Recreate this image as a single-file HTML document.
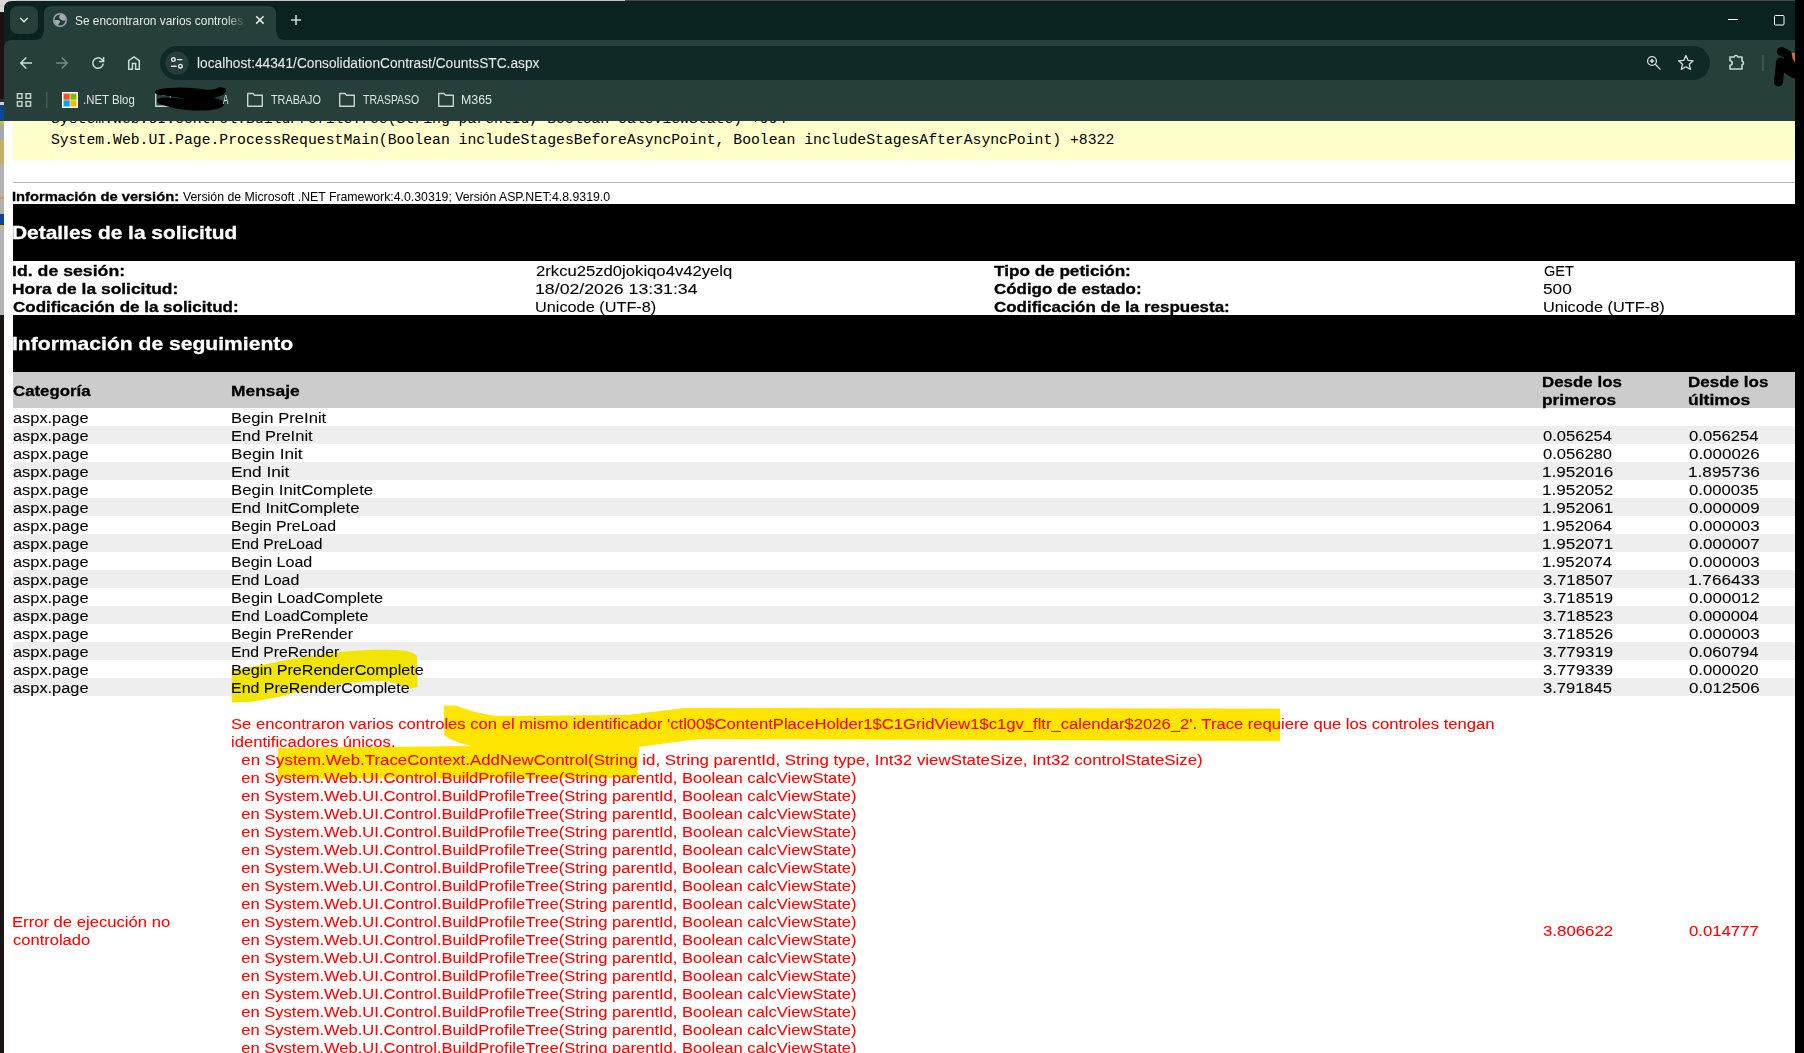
<!DOCTYPE html>
<html><head><meta charset="utf-8">
<style>
*{box-sizing:border-box}
html,body{margin:0;padding:0}
body{width:1804px;height:1053px;overflow:hidden;position:relative;background:#000;font-family:"Liberation Sans",sans-serif}
.a{position:absolute}
.t{position:absolute;white-space:pre;transform-origin:0 0;color:#000}
.mono{font-family:"Liberation Mono",monospace;font-size:14.78px;line-height:20.5px}
.ct{position:absolute;white-space:pre;font-size:13px;color:#dfe9e6;line-height:16px}
</style></head><body>

<div class="a" style="left:4px;top:121px;width:1791px;height:932px;background:#fff"></div>
<div class="a" style="left:13px;top:100px;width:1782px;height:60px;background:#ffffcc"></div>
<div class="t mono" style="left:51px;top:109.4px">System.Web.UI.Control.BuildProfileTree(String parentId, Boolean calcViewState) +994</div>
<div class="t mono" style="left:51px;top:129.9px">System.Web.UI.Page.ProcessRequestMain(Boolean includeStagesBeforeAsyncPoint, Boolean includeStagesAfterAsyncPoint) +8322</div>
<div class="a" style="left:13px;top:182px;width:1782px;height:1px;background:#b8b8b8"></div>
<div class="a" style="left:13px;top:204px;width:1782px;height:57px;background:#000"></div>
<div class="a" style="left:13px;top:315px;width:1782px;height:57px;background:#000"></div>
<div class="a" style="left:13px;top:372px;width:1782px;height:36px;background:#cccccc"></div>
<div class="a" style="left:13px;top:426px;width:1782px;height:18px;background:#eeeeee"></div>
<div class="a" style="left:13px;top:462px;width:1782px;height:18px;background:#eeeeee"></div>
<div class="a" style="left:13px;top:498px;width:1782px;height:18px;background:#eeeeee"></div>
<div class="a" style="left:13px;top:534px;width:1782px;height:18px;background:#eeeeee"></div>
<div class="a" style="left:13px;top:570px;width:1782px;height:18px;background:#eeeeee"></div>
<div class="a" style="left:13px;top:606px;width:1782px;height:18px;background:#eeeeee"></div>
<div class="a" style="left:13px;top:642px;width:1782px;height:18px;background:#eeeeee"></div>
<div class="a" style="left:13px;top:678px;width:1782px;height:18px;background:#eeeeee"></div>
<svg class="a" style="left:0;top:0" width="1804" height="1053" viewBox="0 0 1804 1053">
<path fill="#f2e600" d="M231.7,671 C245,668 255,666 262,665 C290,659 330,652 366,650 C385,649.5 400,650 406,651 C412,652 415,654 417,656 L417.5,687 C414,688 411,688 410,688 C400,685 390,681 380,681 C370,681 360,682 353,682.5 C340,684 325,686 313,688.5 C295,692 285,696 273,698 C262,700 250,702 246,702 L231.7,702.5 Z"/>
<path fill="#ffe500" d="M444,705.5 L456,705.5 C468,710 480,714 498,716 L627,715 C645,713 665,710 685,708 L1280,708.5 L1280,741 L700,739 C680,741 660,744 639,747 L637.5,778 L278,778.5 L278,748 L473,746 C462,744 452,741 444,735 Z"/>
</svg>

<div class="t" style="left:11.83px;top:188.5px;font-size:12.6px;line-height:16px;transform:scaleX(1.1702);font-weight:700;-webkit-text-stroke:0.3px currentColor">Información de versión:</div>
<div class="t" style="left:183.00px;top:188.5px;font-size:12.32px;line-height:16px;transform:scaleX(0.9979)">Versión de Microsoft .NET Framework:4.0.30319; Versión ASP.NET:4.8.9319.0</div>
<div class="t" style="left:11.83px;top:222.4px;font-size:17.9px;line-height:22px;transform:scaleX(1.1675);font-weight:700;-webkit-text-stroke:0.3px currentColor;color:#fff">Detalles de la solicitud</div>
<div class="t" style="left:11.82px;top:333.1px;font-size:17.9px;line-height:22px;transform:scaleX(1.1789);font-weight:700;-webkit-text-stroke:0.3px currentColor;color:#fff">Información de seguimiento</div>
<div class="t" style="left:12.04px;top:262px;font-size:15.3px;line-height:18px;transform:scaleX(1.1573);font-weight:700;-webkit-text-stroke:0.3px currentColor">Id. de sesión:</div>
<div class="t" style="left:536.30px;top:262px;font-size:15.3px;line-height:18px;transform:scaleX(1.0889);-webkit-text-stroke:0.08px currentColor">2rkcu25zd0jokiqo4v42yelq</div>
<div class="t" style="left:994.40px;top:262px;font-size:15.3px;line-height:18px;transform:scaleX(1.1207);font-weight:700;-webkit-text-stroke:0.3px currentColor">Tipo de petición:</div>
<div class="t" style="left:1543.70px;top:262px;font-size:15.3px;line-height:18px;transform:scaleX(0.9484);-webkit-text-stroke:0.08px currentColor">GET</div>
<div class="t" style="left:12.06px;top:280px;font-size:15.3px;line-height:18px;transform:scaleX(1.1375);font-weight:700;-webkit-text-stroke:0.3px currentColor">Hora de la solicitud:</div>
<div class="t" style="left:535.14px;top:280px;font-size:15.3px;line-height:18px;transform:scaleX(1.1583);-webkit-text-stroke:0.08px currentColor">18/02/2026 13:31:34</div>
<div class="t" style="left:994.40px;top:280px;font-size:15.3px;line-height:18px;transform:scaleX(1.1061);font-weight:700;-webkit-text-stroke:0.3px currentColor">Código de estado:</div>
<div class="t" style="left:1542.58px;top:280px;font-size:15.3px;line-height:18px;transform:scaleX(1.1250);-webkit-text-stroke:0.08px currentColor">500</div>
<div class="t" style="left:13.20px;top:298px;font-size:15.3px;line-height:18px;transform:scaleX(1.1104);font-weight:700;-webkit-text-stroke:0.3px currentColor">Codificación de la solicitud:</div>
<div class="t" style="left:535.24px;top:298px;font-size:15.3px;line-height:18px;transform:scaleX(1.0643);-webkit-text-stroke:0.08px currentColor">Unicode (UTF-8)</div>
<div class="t" style="left:994.40px;top:298px;font-size:15.3px;line-height:18px;transform:scaleX(1.1094);font-weight:700;-webkit-text-stroke:0.3px currentColor">Codificación de la respuesta:</div>
<div class="t" style="left:1542.63px;top:298px;font-size:15.3px;line-height:18px;transform:scaleX(1.0688);-webkit-text-stroke:0.08px currentColor">Unicode (UTF-8)</div>
<div class="t" style="left:13.20px;top:382px;font-size:15.3px;line-height:18px;transform:scaleX(1.1000);font-weight:700;-webkit-text-stroke:0.3px currentColor">Categoría</div>
<div class="t" style="left:231.06px;top:382px;font-size:15.3px;line-height:18px;transform:scaleX(1.1373);font-weight:700;-webkit-text-stroke:0.3px currentColor">Mensaje</div>
<div class="t" style="left:1541.59px;top:373px;font-size:15.3px;line-height:18px;transform:scaleX(1.1056);font-weight:700;-webkit-text-stroke:0.3px currentColor">Desde los</div>
<div class="t" style="left:1541.57px;top:391px;font-size:15.3px;line-height:18px;transform:scaleX(1.1328);font-weight:700;-webkit-text-stroke:0.3px currentColor">primeros</div>
<div class="t" style="left:1687.99px;top:373px;font-size:15.3px;line-height:18px;transform:scaleX(1.1127);font-weight:700;-webkit-text-stroke:0.3px currentColor">Desde los</div>
<div class="t" style="left:1687.95px;top:391px;font-size:15.3px;line-height:18px;transform:scaleX(1.1453);font-weight:700;-webkit-text-stroke:0.3px currentColor">últimos</div>
<div class="t" style="left:13.20px;top:409px;font-size:15.3px;line-height:18px;transform:scaleX(1.0700);-webkit-text-stroke:0.08px currentColor">aspx.page</div>
<div class="t" style="left:231.31px;top:409px;font-size:15.3px;line-height:18px;transform:scaleX(1.0874);-webkit-text-stroke:0.08px currentColor">Begin PreInit</div>
<div class="t" style="left:13.20px;top:427px;font-size:15.3px;line-height:18px;transform:scaleX(1.0700);-webkit-text-stroke:0.08px currentColor">aspx.page</div>
<div class="t" style="left:231.32px;top:427px;font-size:15.3px;line-height:18px;transform:scaleX(1.0787);-webkit-text-stroke:0.08px currentColor">End PreInit</div>
<div class="t" style="left:1542.70px;top:427px;font-size:15.3px;line-height:18px;transform:scaleX(1.0813);-webkit-text-stroke:0.08px currentColor">0.056254</div>
<div class="t" style="left:1689.05px;top:427px;font-size:15.3px;line-height:18px;transform:scaleX(1.0898);-webkit-text-stroke:0.08px currentColor">0.056254</div>
<div class="t" style="left:13.20px;top:445px;font-size:15.3px;line-height:18px;transform:scaleX(1.0700);-webkit-text-stroke:0.08px currentColor">aspx.page</div>
<div class="t" style="left:231.28px;top:445px;font-size:15.3px;line-height:18px;transform:scaleX(1.1222);-webkit-text-stroke:0.08px currentColor">Begin Init</div>
<div class="t" style="left:1542.70px;top:445px;font-size:15.3px;line-height:18px;transform:scaleX(1.0813);-webkit-text-stroke:0.08px currentColor">0.056280</div>
<div class="t" style="left:1689.05px;top:445px;font-size:15.3px;line-height:18px;transform:scaleX(1.1071);-webkit-text-stroke:0.08px currentColor">0.000026</div>
<div class="t" style="left:13.20px;top:463px;font-size:15.3px;line-height:18px;transform:scaleX(1.0700);-webkit-text-stroke:0.08px currentColor">aspx.page</div>
<div class="t" style="left:231.27px;top:463px;font-size:15.3px;line-height:18px;transform:scaleX(1.1255);-webkit-text-stroke:0.08px currentColor">End Init</div>
<div class="t" style="left:1541.58px;top:463px;font-size:15.3px;line-height:18px;transform:scaleX(1.1161);-webkit-text-stroke:0.08px currentColor">1.952016</div>
<div class="t" style="left:1687.92px;top:463px;font-size:15.3px;line-height:18px;transform:scaleX(1.1250);-webkit-text-stroke:0.08px currentColor">1.895736</div>
<div class="t" style="left:13.20px;top:481px;font-size:15.3px;line-height:18px;transform:scaleX(1.0700);-webkit-text-stroke:0.08px currentColor">aspx.page</div>
<div class="t" style="left:231.30px;top:481px;font-size:15.3px;line-height:18px;transform:scaleX(1.1000);-webkit-text-stroke:0.08px currentColor">Begin InitComplete</div>
<div class="t" style="left:1541.58px;top:481px;font-size:15.3px;line-height:18px;transform:scaleX(1.1161);-webkit-text-stroke:0.08px currentColor">1.952052</div>
<div class="t" style="left:1689.05px;top:481px;font-size:15.3px;line-height:18px;transform:scaleX(1.0898);-webkit-text-stroke:0.08px currentColor">0.000035</div>
<div class="t" style="left:13.20px;top:499px;font-size:15.3px;line-height:18px;transform:scaleX(1.0700);-webkit-text-stroke:0.08px currentColor">aspx.page</div>
<div class="t" style="left:231.31px;top:499px;font-size:15.3px;line-height:18px;transform:scaleX(1.0948);-webkit-text-stroke:0.08px currentColor">End InitComplete</div>
<div class="t" style="left:1541.58px;top:499px;font-size:15.3px;line-height:18px;transform:scaleX(1.1161);-webkit-text-stroke:0.08px currentColor">1.952061</div>
<div class="t" style="left:1689.05px;top:499px;font-size:15.3px;line-height:18px;transform:scaleX(1.1071);-webkit-text-stroke:0.08px currentColor">0.000009</div>
<div class="t" style="left:13.20px;top:517px;font-size:15.3px;line-height:18px;transform:scaleX(1.0700);-webkit-text-stroke:0.08px currentColor">aspx.page</div>
<div class="t" style="left:231.36px;top:517px;font-size:15.3px;line-height:18px;transform:scaleX(1.0370);-webkit-text-stroke:0.08px currentColor">Begin PreLoad</div>
<div class="t" style="left:1541.60px;top:517px;font-size:15.3px;line-height:18px;transform:scaleX(1.0984);-webkit-text-stroke:0.08px currentColor">1.952064</div>
<div class="t" style="left:1689.05px;top:517px;font-size:15.3px;line-height:18px;transform:scaleX(1.1071);-webkit-text-stroke:0.08px currentColor">0.000003</div>
<div class="t" style="left:13.20px;top:535px;font-size:15.3px;line-height:18px;transform:scaleX(1.0700);-webkit-text-stroke:0.08px currentColor">aspx.page</div>
<div class="t" style="left:231.38px;top:535px;font-size:15.3px;line-height:18px;transform:scaleX(1.0250);-webkit-text-stroke:0.08px currentColor">End PreLoad</div>
<div class="t" style="left:1541.58px;top:535px;font-size:15.3px;line-height:18px;transform:scaleX(1.1161);-webkit-text-stroke:0.08px currentColor">1.952071</div>
<div class="t" style="left:1689.05px;top:535px;font-size:15.3px;line-height:18px;transform:scaleX(1.1071);-webkit-text-stroke:0.08px currentColor">0.000007</div>
<div class="t" style="left:13.20px;top:553px;font-size:15.3px;line-height:18px;transform:scaleX(1.0700);-webkit-text-stroke:0.08px currentColor">aspx.page</div>
<div class="t" style="left:231.35px;top:553px;font-size:15.3px;line-height:18px;transform:scaleX(1.0500);-webkit-text-stroke:0.08px currentColor">Begin Load</div>
<div class="t" style="left:1541.60px;top:553px;font-size:15.3px;line-height:18px;transform:scaleX(1.0984);-webkit-text-stroke:0.08px currentColor">1.952074</div>
<div class="t" style="left:1689.05px;top:553px;font-size:15.3px;line-height:18px;transform:scaleX(1.1071);-webkit-text-stroke:0.08px currentColor">0.000003</div>
<div class="t" style="left:13.20px;top:571px;font-size:15.3px;line-height:18px;transform:scaleX(1.0700);-webkit-text-stroke:0.08px currentColor">aspx.page</div>
<div class="t" style="left:231.36px;top:571px;font-size:15.3px;line-height:18px;transform:scaleX(1.0422);-webkit-text-stroke:0.08px currentColor">End Load</div>
<div class="t" style="left:1542.70px;top:571px;font-size:15.3px;line-height:18px;transform:scaleX(1.0984);-webkit-text-stroke:0.08px currentColor">3.718507</div>
<div class="t" style="left:1687.92px;top:571px;font-size:15.3px;line-height:18px;transform:scaleX(1.1250);-webkit-text-stroke:0.08px currentColor">1.766433</div>
<div class="t" style="left:13.20px;top:589px;font-size:15.3px;line-height:18px;transform:scaleX(1.0700);-webkit-text-stroke:0.08px currentColor">aspx.page</div>
<div class="t" style="left:231.34px;top:589px;font-size:15.3px;line-height:18px;transform:scaleX(1.0645);-webkit-text-stroke:0.08px currentColor">Begin LoadComplete</div>
<div class="t" style="left:1542.70px;top:589px;font-size:15.3px;line-height:18px;transform:scaleX(1.0984);-webkit-text-stroke:0.08px currentColor">3.718519</div>
<div class="t" style="left:1689.05px;top:589px;font-size:15.3px;line-height:18px;transform:scaleX(1.1071);-webkit-text-stroke:0.08px currentColor">0.000012</div>
<div class="t" style="left:13.20px;top:607px;font-size:15.3px;line-height:18px;transform:scaleX(1.0700);-webkit-text-stroke:0.08px currentColor">aspx.page</div>
<div class="t" style="left:231.35px;top:607px;font-size:15.3px;line-height:18px;transform:scaleX(1.0500);-webkit-text-stroke:0.08px currentColor">End LoadComplete</div>
<div class="t" style="left:1542.70px;top:607px;font-size:15.3px;line-height:18px;transform:scaleX(1.0984);-webkit-text-stroke:0.08px currentColor">3.718523</div>
<div class="t" style="left:1689.05px;top:607px;font-size:15.3px;line-height:18px;transform:scaleX(1.0898);-webkit-text-stroke:0.08px currentColor">0.000004</div>
<div class="t" style="left:13.20px;top:625px;font-size:15.3px;line-height:18px;transform:scaleX(1.0700);-webkit-text-stroke:0.08px currentColor">aspx.page</div>
<div class="t" style="left:231.36px;top:625px;font-size:15.3px;line-height:18px;transform:scaleX(1.0393);-webkit-text-stroke:0.08px currentColor">Begin PreRender</div>
<div class="t" style="left:1542.70px;top:625px;font-size:15.3px;line-height:18px;transform:scaleX(1.0984);-webkit-text-stroke:0.08px currentColor">3.718526</div>
<div class="t" style="left:1689.05px;top:625px;font-size:15.3px;line-height:18px;transform:scaleX(1.1071);-webkit-text-stroke:0.08px currentColor">0.000003</div>
<div class="t" style="left:13.20px;top:643px;font-size:15.3px;line-height:18px;transform:scaleX(1.0700);-webkit-text-stroke:0.08px currentColor">aspx.page</div>
<div class="t" style="left:231.37px;top:643px;font-size:15.3px;line-height:18px;transform:scaleX(1.0257);-webkit-text-stroke:0.08px currentColor">End PreRender</div>
<div class="t" style="left:1542.70px;top:643px;font-size:15.3px;line-height:18px;transform:scaleX(1.0984);-webkit-text-stroke:0.08px currentColor">3.779319</div>
<div class="t" style="left:1689.05px;top:643px;font-size:15.3px;line-height:18px;transform:scaleX(1.0898);-webkit-text-stroke:0.08px currentColor">0.060794</div>
<div class="t" style="left:13.20px;top:661px;font-size:15.3px;line-height:18px;transform:scaleX(1.0700);-webkit-text-stroke:0.08px currentColor">aspx.page</div>
<div class="t" style="left:231.35px;top:661px;font-size:15.3px;line-height:18px;transform:scaleX(1.0536);-webkit-text-stroke:0.08px currentColor">Begin PreRenderComplete</div>
<div class="t" style="left:1542.70px;top:661px;font-size:15.3px;line-height:18px;transform:scaleX(1.0984);-webkit-text-stroke:0.08px currentColor">3.779339</div>
<div class="t" style="left:1689.05px;top:661px;font-size:15.3px;line-height:18px;transform:scaleX(1.0898);-webkit-text-stroke:0.08px currentColor">0.000020</div>
<div class="t" style="left:13.20px;top:679px;font-size:15.3px;line-height:18px;transform:scaleX(1.0700);-webkit-text-stroke:0.08px currentColor">aspx.page</div>
<div class="t" style="left:231.36px;top:679px;font-size:15.3px;line-height:18px;transform:scaleX(1.0447);-webkit-text-stroke:0.08px currentColor">End PreRenderComplete</div>
<div class="t" style="left:1542.70px;top:679px;font-size:15.3px;line-height:18px;transform:scaleX(1.0813);-webkit-text-stroke:0.08px currentColor">3.791845</div>
<div class="t" style="left:1689.05px;top:679px;font-size:15.3px;line-height:18px;transform:scaleX(1.1071);-webkit-text-stroke:0.08px currentColor">0.012506</div>
<div class="t" style="left:231.11px;top:715px;font-size:15.3px;line-height:18px;transform:scaleX(1.0866);-webkit-text-stroke:0.08px currentColor;color:#ff0000">Se encontraron varios controles con el mismo identificador 'ctl00$ContentPlaceHolder1$C1GridView1$c1gv_fltr_calendar$2026_2'. Trace requiere que los controles tengan</div>
<div class="t" style="left:231.11px;top:733px;font-size:15.3px;line-height:18px;transform:scaleX(1.0872);-webkit-text-stroke:0.08px currentColor;color:#ff0000">identificadores únicos.</div>
<div class="t" style="left:232.08px;top:751px;font-size:15.3px;line-height:18px;transform:scaleX(1.1020);-webkit-text-stroke:0.08px currentColor;color:#ff0000">  en System.Web.TraceContext.AddNewControl(String id, String parentId, String type, Int32 viewStateSize, Int32 controlStateSize)</div>
<div class="t" style="left:232.26px;top:769px;font-size:15.3px;line-height:18px;transform:scaleX(1.0824);-webkit-text-stroke:0.08px currentColor;color:#ff0000">  en System.Web.UI.Control.BuildProfileTree(String parentId, Boolean calcViewState)</div>
<div class="t" style="left:232.26px;top:787px;font-size:15.3px;line-height:18px;transform:scaleX(1.0824);-webkit-text-stroke:0.08px currentColor;color:#ff0000">  en System.Web.UI.Control.BuildProfileTree(String parentId, Boolean calcViewState)</div>
<div class="t" style="left:232.26px;top:805px;font-size:15.3px;line-height:18px;transform:scaleX(1.0824);-webkit-text-stroke:0.08px currentColor;color:#ff0000">  en System.Web.UI.Control.BuildProfileTree(String parentId, Boolean calcViewState)</div>
<div class="t" style="left:232.26px;top:823px;font-size:15.3px;line-height:18px;transform:scaleX(1.0824);-webkit-text-stroke:0.08px currentColor;color:#ff0000">  en System.Web.UI.Control.BuildProfileTree(String parentId, Boolean calcViewState)</div>
<div class="t" style="left:232.26px;top:841px;font-size:15.3px;line-height:18px;transform:scaleX(1.0824);-webkit-text-stroke:0.08px currentColor;color:#ff0000">  en System.Web.UI.Control.BuildProfileTree(String parentId, Boolean calcViewState)</div>
<div class="t" style="left:232.26px;top:859px;font-size:15.3px;line-height:18px;transform:scaleX(1.0824);-webkit-text-stroke:0.08px currentColor;color:#ff0000">  en System.Web.UI.Control.BuildProfileTree(String parentId, Boolean calcViewState)</div>
<div class="t" style="left:232.26px;top:877px;font-size:15.3px;line-height:18px;transform:scaleX(1.0824);-webkit-text-stroke:0.08px currentColor;color:#ff0000">  en System.Web.UI.Control.BuildProfileTree(String parentId, Boolean calcViewState)</div>
<div class="t" style="left:232.26px;top:895px;font-size:15.3px;line-height:18px;transform:scaleX(1.0824);-webkit-text-stroke:0.08px currentColor;color:#ff0000">  en System.Web.UI.Control.BuildProfileTree(String parentId, Boolean calcViewState)</div>
<div class="t" style="left:232.26px;top:913px;font-size:15.3px;line-height:18px;transform:scaleX(1.0824);-webkit-text-stroke:0.08px currentColor;color:#ff0000">  en System.Web.UI.Control.BuildProfileTree(String parentId, Boolean calcViewState)</div>
<div class="t" style="left:232.26px;top:931px;font-size:15.3px;line-height:18px;transform:scaleX(1.0824);-webkit-text-stroke:0.08px currentColor;color:#ff0000">  en System.Web.UI.Control.BuildProfileTree(String parentId, Boolean calcViewState)</div>
<div class="t" style="left:232.26px;top:949px;font-size:15.3px;line-height:18px;transform:scaleX(1.0824);-webkit-text-stroke:0.08px currentColor;color:#ff0000">  en System.Web.UI.Control.BuildProfileTree(String parentId, Boolean calcViewState)</div>
<div class="t" style="left:232.26px;top:967px;font-size:15.3px;line-height:18px;transform:scaleX(1.0824);-webkit-text-stroke:0.08px currentColor;color:#ff0000">  en System.Web.UI.Control.BuildProfileTree(String parentId, Boolean calcViewState)</div>
<div class="t" style="left:232.26px;top:985px;font-size:15.3px;line-height:18px;transform:scaleX(1.0824);-webkit-text-stroke:0.08px currentColor;color:#ff0000">  en System.Web.UI.Control.BuildProfileTree(String parentId, Boolean calcViewState)</div>
<div class="t" style="left:232.26px;top:1003px;font-size:15.3px;line-height:18px;transform:scaleX(1.0824);-webkit-text-stroke:0.08px currentColor;color:#ff0000">  en System.Web.UI.Control.BuildProfileTree(String parentId, Boolean calcViewState)</div>
<div class="t" style="left:232.26px;top:1021px;font-size:15.3px;line-height:18px;transform:scaleX(1.0824);-webkit-text-stroke:0.08px currentColor;color:#ff0000">  en System.Web.UI.Control.BuildProfileTree(String parentId, Boolean calcViewState)</div>
<div class="t" style="left:232.26px;top:1039px;font-size:15.3px;line-height:18px;transform:scaleX(1.0824);-webkit-text-stroke:0.08px currentColor;color:#ff0000">  en System.Web.UI.Control.BuildProfileTree(String parentId, Boolean calcViewState)</div>
<div class="t" style="left:232.26px;top:1057px;font-size:15.3px;line-height:18px;transform:scaleX(1.0824);-webkit-text-stroke:0.08px currentColor;color:#ff0000">  en System.Web.UI.Control.BuildProfileTree(String parentId, Boolean calcViewState)</div>
<div class="t" style="left:12.21px;top:913px;font-size:15.3px;line-height:18px;transform:scaleX(1.0882);-webkit-text-stroke:0.08px currentColor;color:#ff0000">Error de ejecución no</div>
<div class="t" style="left:13.30px;top:931px;font-size:15.3px;line-height:18px;transform:scaleX(1.0803);-webkit-text-stroke:0.08px currentColor;color:#ff0000">controlado</div>
<div class="t" style="left:1542.50px;top:921.8px;font-size:15.3px;line-height:18px;transform:scaleX(1.1000);-webkit-text-stroke:0.08px currentColor;color:#ff0000">3.806622</div>
<div class="t" style="left:1689.10px;top:921.8px;font-size:15.3px;line-height:18px;transform:scaleX(1.0937);-webkit-text-stroke:0.08px currentColor;color:#ff0000">0.014777</div>
<!-- desktop edges -->
<div class="a" style="left:0;top:0;width:4px;height:1053px;background:#1a1412"></div>
<div class="a" style="left:0;top:0;width:4px;height:12px;background:#d8d8d8"></div>
<div class="a" style="left:0;top:99px;width:4px;height:3px;background:#2c2c2c"></div>
<div class="a" style="left:0;top:102px;width:4px;height:3px;background:#d0d0d0"></div>
<div class="a" style="left:0;top:105px;width:4px;height:16px;background:#0b4792"></div>
<div class="a" style="left:0;top:121px;width:4px;height:3px;background:#c9c210"></div>
<div class="a" style="left:0;top:124px;width:4px;height:16px;background:#a8a8a8"></div>
<div class="a" style="left:0;top:140px;width:4px;height:24px;background:#c6b066"></div>
<div class="a" style="left:0;top:164px;width:4px;height:50px;background:#b2b2b2"></div>
<div class="a" style="left:0;top:197px;width:4px;height:2px;background:#d49a40"></div>
<div class="a" style="left:0;top:214px;width:4px;height:11px;background:#0b4792"></div>
<div class="a" style="left:0;top:225px;width:4px;height:2px;background:#c9c210"></div>
<div class="a" style="left:0;top:227px;width:4px;height:88px;background:#b4b4b4"></div>
<div class="a" style="left:0;top:0;width:625px;height:1px;background:#c4c4c4"></div>
<div class="a" style="left:625px;top:0;width:1170px;height:1px;background:#464646"></div>
<svg class="a" style="left:0;top:0" width="1804" height="122" viewBox="0 0 1804 122">
  <!-- tab strip -->
  <rect x="0" y="0" width="16" height="12" fill="#d8d8d8"/>
  <rect x="0" y="12" width="4" height="30" fill="#1a1412"/>
  <path fill="#0a2320" d="M4,9 Q4,1 12,1 L1795,1 L1795,50 L4,50 Z"/>
  <!-- toolbar -->
  <path fill="#263f3b" d="M4,48 Q4,40 12,40 L1795,40 L1795,121 L4,121 Z"/>
  <!-- tab search btn -->
  <rect x="10" y="6" width="28" height="28" rx="8" fill="#263f3b"/>
  <path d="M20.3,18 L24,21.7 L27.7,18" fill="none" stroke="#e8eeeb" stroke-width="1.4"/>
  <!-- active tab -->
  <path fill="#263f3b" d="M34,40 Q44,40 44,30 L44,14 Q44,6 52,6 L268,6 Q276,6 276,14 L276,30 Q276,40 286,40 Z"/>
  <!-- globe -->
  <circle cx="60" cy="20" r="7" fill="#a6acb4"/>
  <circle cx="60" cy="20" r="5.6" fill="#223e39"/>
  <path fill="#a6acb4" d="M60.6,14.4 C59.6,15.4 58.9,16.4 59.2,17.6 C59.5,18.7 60.6,19.4 61.4,19.9 C62.4,20.5 63.6,20.8 65.2,20.6 L65.6,19.5 C65.6,16.6 63.5,14.6 60.6,14.4 Z"/>
  <path fill="#a6acb4" d="M54.4,20.2 C56,20 57.6,19.9 58.9,20.3 C60.3,20.8 60.5,21.7 59.8,22.4 C59,23.1 58.2,23.9 58.4,25.2 C56.2,24.8 54.5,22.7 54.4,20.2 Z"/>
  <!-- close x -->
  <path d="M256.2,16.2 L263.6,23.6 M263.6,16.2 L256.2,23.6" stroke="#e8eeeb" stroke-width="1.5"/>
  <!-- new tab + -->
  <path d="M291,20 L301,20 M296,15 L296,25" stroke="#c5dbd5" stroke-width="1.6"/>
  <!-- window controls -->
  <path d="M1728,19.5 L1738,19.5" stroke="#fff" stroke-width="1"/>
  <rect x="1774.5" y="15.5" width="9.5" height="9.5" rx="1" fill="none" stroke="#fff" stroke-width="1"/>
  <!-- nav icons -->
  <g fill="none" stroke="#c7ddd7" stroke-width="1.5">
    <path d="M32,63 L21,63 M26.3,57.5 L20.8,63 L26.3,68.5"/>
    <path d="M103.2,63.6 A5.2,5.2 0 1 1 101.9,59.6 L103.4,61.3"/>
    <path d="M99.1,61.4 L103.6,61.4 L103.6,57.1"/>
    <path d="M128.7,69.3 L128.7,60.6 L134,56.8 L139.3,60.6 L139.3,69.3 L135.6,69.3 L135.6,63.6 L132.4,63.6 L132.4,69.3 Z"/>
  </g>
  <path d="M67,63 L56,63 M61.7,57.5 L67.2,63 L61.7,68.5" fill="none" stroke="#748a84" stroke-width="1.5"/>
  
  <!-- omnibox -->
  <rect x="160" y="46" width="1550" height="34" rx="17" fill="#112926"/>
  <circle cx="177" cy="63" r="11.6" fill="#263d39"/>
  <g stroke="#e0e8e5" stroke-width="1.4" fill="none">
    <circle cx="173.4" cy="59.6" r="1.8"/>
    <path d="M177,59.6 L182.4,59.6 M171,66.2 L176.6,66.2"/>
    <circle cx="180.4" cy="66.2" r="1.8"/>
  </g>
  <!-- zoom + star -->
  <g fill="none" stroke="#d6dcda" stroke-width="1.3">
    <circle cx="1652" cy="61" r="4.4"/>
    <path d="M1655.3,64.3 L1660.5,69.6"/>
    <path d="M1685.9,55.6 L1688,60.3 L1693.2,60.8 L1689.3,64.3 L1690.5,69.4 L1685.9,66.8 L1681.3,69.4 L1682.5,64.3 L1678.6,60.8 L1683.8,60.3 Z" stroke-linejoin="round"/>
  </g>
  <path d="M1649.9,61 L1654.1,61 M1652,58.9 L1652,63.1" stroke="#d6dcda" stroke-width="1.6"/>
  <!-- puzzle -->
  <path d="M1730,57 L1734,57 A2.1,2.1 0 0 1 1738,57 L1742,57 L1742,61 A2.1,2.1 0 0 1 1742,65 L1742,69 L1730,69 L1730,65.2 A2.2,2.2 0 0 0 1730,60.8 Z" fill="none" stroke="#c7ddd7" stroke-width="1.6" stroke-linejoin="round"/>
  <rect x="1762" y="55" width="2" height="16" fill="#3d5652"/>
  <!-- avatar scribble -->
  
  <g stroke="#000" stroke-width="9" stroke-linecap="round" fill="none">
    <path d="M1781.5,51.5 C1786,53 1790,56 1794,61"/>
    <path d="M1780.5,62 C1780,70 1779,76 1778.5,82"/>
    <path d="M1784,66 C1788,70 1792,73 1795,74"/>
  </g>
  <rect x="1784" y="58" width="11" height="12" fill="#000"/>
  <path fill="#c8703a" d="M1791.5,52.5 L1795,53 L1795,62.5 L1792.5,58.5 Z"/>
  <!-- bookmarks -->
  <g fill="none" stroke="#c9d3d0" stroke-width="1.4">
    <rect x="17.4" y="93.7" width="4.6" height="4.6"/>
    <rect x="26" y="93.7" width="4.6" height="4.6"/>
    <rect x="17.4" y="101.6" width="4.6" height="4.6"/>
    <rect x="26" y="101.6" width="4.6" height="4.6"/>
  </g>
  <rect x="46" y="92" width="1.6" height="16" fill="#3d5652"/>
  <rect x="62" y="92" width="16" height="16" fill="#fff"/>
  <rect x="63.5" y="93.5" width="6.2" height="6.2" fill="#f25022"/>
  <rect x="70.3" y="93.5" width="6.2" height="6.2" fill="#7fba00"/>
  <rect x="63.5" y="100.3" width="6.2" height="6.2" fill="#00a4ef"/>
  <rect x="70.3" y="100.3" width="6.2" height="6.2" fill="#ffb900"/>
  <g fill="none" stroke="#c9d3d0" stroke-width="1.4" stroke-linejoin="round">
    <path d="M155.7,93.5 L161,93.5 L162.6,95.3 L170.3,95.3 L170.3,106.3 L155.7,106.3 Z"/>
    <path d="M247.7,93.5 L253,93.5 L254.6,95.3 L262.3,95.3 L262.3,106.3 L247.7,106.3 Z"/>
    <path d="M339.7,93.5 L345,93.5 L346.6,95.3 L354.3,95.3 L354.3,106.3 L339.7,106.3 Z"/>
    <path d="M438.7,93.5 L444,93.5 L445.6,95.3 L453.3,95.3 L453.3,106.3 L438.7,106.3 Z"/>
  </g>
  <path fill="#000" d="M157,90 C170,86.5 190,87 205,89.5 C212,90.5 218,88 222,87.5 C226,87.5 227,90.5 225,93 C222,96 216,97 214,98 C220,99 225,101 224,105 C222,109 210,111 195,110.5 C180,110 168,107 160,104 C156,102 156,99 160,98 C166,97 175,98 185,99 C175,96 162,96 157,94.5 C154,93 154,91 157,90 Z"/>
  <circle cx="220" cy="91.5" r="4.2" fill="#000"/>
</svg>

<div class="t" style="left:75.01px;top:12.8px;font-size:12px;line-height:16px;transform:scaleX(0.9923);color:#e3eae7;-webkit-mask-image:linear-gradient(90deg,#000 151.2px,rgba(0,0,0,0.25) 168.3px);width:171.3px;overflow:hidden">Se encontraron varios controles</div>
<div class="t" style="left:196.72px;top:55px;font-size:14px;line-height:16px;transform:scaleX(0.9799);-webkit-text-stroke:0.08px currentColor;color:#e3eae7">localhost:44341/ConsolidationContrast/CountsSTC.aspx</div>
<div class="t" style="left:83.26px;top:91.5px;font-size:12.2px;line-height:16px;transform:scaleX(0.9352);color:#dde6e3">.NET Blog</div>
<div class="t" style="left:223.20px;top:91.5px;font-size:12.2px;line-height:16px;transform:scaleX(0.6625);color:#dde6e3">A</div>
<div class="t" style="left:271.00px;top:91.5px;font-size:12.2px;line-height:16px;transform:scaleX(0.8875);color:#dde6e3">TRABAJO</div>
<div class="t" style="left:363.30px;top:91.5px;font-size:12.2px;line-height:16px;transform:scaleX(0.8585);color:#dde6e3">TRASPASO</div>
<div class="t" style="left:461.28px;top:91.5px;font-size:12.2px;line-height:16px;transform:scaleX(1.0172);color:#dde6e3">M365</div>
<div class="a" style="left:1795px;top:0;width:9px;height:1053px;background:#000"></div>
</body></html>
